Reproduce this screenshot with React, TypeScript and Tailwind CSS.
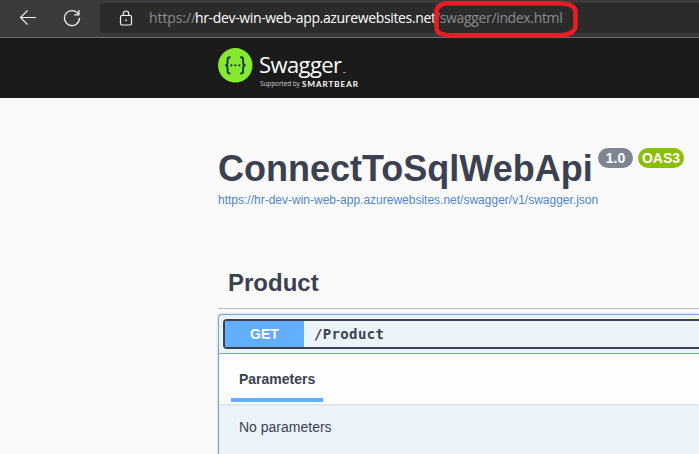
function BackIcon() {
  return (
    <svg className="ml-[19px] h-[18px] w-[18px] shrink-0" viewBox="0 0 18 18" fill="none" stroke="#f2f2f2" strokeWidth="1.2">
      <path d="M17 8.500H1.500M8.500 1.500 1.500 8.500l7 7" />
    </svg>
  );
}

function ReloadIcon() {
  return (
    <svg className="ml-[26px] h-[18px] w-[18px] shrink-0" viewBox="0 0 18 18" fill="none" stroke="#f2f2f2" strokeWidth="1.3">
      <path d="M15.6 5.5A7.5 7.5 0 1 0 16.5 9M15.9 1v4.8h-4.8" />
    </svg>
  );
}

function LockIcon() {
  return (
    <svg className="ml-[19px] h-[17px] w-[14px] shrink-0" viewBox="0 0 14 17" fill="none" stroke="#f2f2f2" strokeWidth="1.2">
      <rect x="1.5" y="5.500" width="11" height="9.500" rx="1.4" />
      <path d="M4.300 5.500V3.700a2.700 2.700 0 0 1 5.400 0v1.800" />
      <circle cx="7" cy="10.300" r="0.900" fill="#f2f2f2" stroke="none" />
    </svg>
  );
}

function BrowserBar() {
  return (
    <div className="relative flex h-[38px] border-b border-[#6a6a6a] bg-[#3b3b3b]">
      <div className="flex h-[35px] w-[100px] shrink-0 items-center">
        <BackIcon />
        <ReloadIcon />
      </div>
      <div className="mt-[3px] flex h-[30px] flex-1 items-center rounded-l bg-[#2b2b2b] font-['Open_Sans',sans-serif] text-[14px] leading-[30px] whitespace-nowrap">
        <LockIcon />
        <span className="ml-[16px] w-[46px] shrink-0 tracking-[-0.1px] text-[#8c8c8c]">https://</span>
        <span className="w-[240px] shrink-0 tracking-[-0.35px] text-white">hr-dev-win-web-app.azurewebsites.net</span>
        <span className="tracking-[-0.350px] text-[#8c8c8c]">/swagger/index.html</span>
      </div>
      <svg className="absolute top-0 left-[432px] h-[39px] w-[148px]" viewBox="0 0 148 39" fill="none" stroke="#ec1c24" strokeWidth="4.5" strokeLinejoin="round">
        <path d="M17 3.2H126Q143.5 3.5 143.5 12V25Q143.5 35 126 35.3H20Q4.500 35 4.500 28V12Q4.500 3.500 17 3.200Z" />
      </svg>
    </div>
  );
}

function SwaggerLogo() {
  return (
    <div className="flex pt-[10px] pl-[218px]">
      <svg className="h-[35px] w-[35px] shrink-0" viewBox="0 0 35 35">
        <circle cx="17.300" cy="17.300" r="17.200" fill="#85ea2d" />
        <g fill="none" stroke="#173647" strokeWidth="1.900">
          <path d="M12.500 9.300H11.500Q9.600 9.300 9.600 11.300V14.500Q9.600 17.300 7.200 17.300 9.600 17.300 9.600 20V23.400Q9.600 25.400 11.500 25.400H12.500" />
          <path d="M22.200 9.300H23.200Q25.100 9.300 25.100 11.300V14.500Q25.100 17.300 27.500 17.300 25.100 17.300 25.100 20V23.400Q25.100 25.400 23.200 25.400H22.200" />
        </g>
        <g fill="#173647">
          <circle cx="13.400" cy="17.300" r="1.150" />
          <circle cx="17.400" cy="17.300" r="1.150" />
          <circle cx="21.400" cy="17.300" r="1.150" />
        </g>
      </svg>
      <div className="ml-[6px] font-['Open_Sans',sans-serif] whitespace-nowrap text-white">
        <div className="flex h-[30px] items-end">
          <span className="text-[22px] leading-[28px] tracking-[-0.600px]">Swagger</span>
          <span className="mb-[5px] ml-[2px] h-px w-[3px] bg-[#8a8a8a]" />
        </div>
        <div className="flex h-[12px] items-center pl-px leading-[12px]">
          <span className="w-[42px] text-[6.500px] tracking-[-0.100px] text-[#cccccc]">Supported by</span>
          <span className="font-['Lato',sans-serif] text-[8px] font-bold tracking-[1px]">SMARTBEAR</span>
        </div>
      </div>
    </div>
  );
}

function ApiInfo() {
  return (
    <section className="h-[157px] pt-[48px] pl-[218px] whitespace-nowrap">
      <div className="flex h-[44px]">
        <h1 className="w-[375px] text-[36px] leading-[46px] font-bold">ConnectToSqlWebApi</h1>
        <div className="mt-[2px] ml-[5px] flex gap-[5px] text-center text-[14px] leading-[20px] font-bold text-white">
          <span className="h-[20px] w-[35px] rounded-full bg-[#7d8492]">1.0</span>
          <span className="h-[20px] w-[46px] rounded-full bg-[#89bf04]">OAS3</span>
        </div>
      </div>
      <a className="block text-[12px] leading-[20px] text-[#4f86c8]">https://hr-dev-win-web-app.azurewebsites.net/swagger/v1/swagger.json</a>
    </section>
  );
}

function Operation() {
  return (
    <div className="h-[150px] rounded-tl border-t border-l border-[#6fa8d8] bg-[#ebf3fb] shadow-[0_0_3px_rgba(0,0,0,0.19)]">
      <div className="h-[39px] border-b border-[#6fa8d8] pt-[4px] pl-[4px]">
        <div className="flex h-[30px] items-stretch rounded-l border-y-2 border-l-2 border-[#3b4151]">
          <span className="w-[79px] bg-[#61affe] text-center text-[14px] leading-[27px] font-bold text-white [text-shadow:0_1px_0_rgba(0,0,0,0.1)]">GET</span>
          <span className="pl-[10px] font-['DejaVu_Sans_Mono',monospace] text-[14px] leading-[27px] font-bold tracking-[0.350px]">/Product</span>
        </div>
      </div>
      <div className="h-[50px] bg-[#fdfeff] pl-[12px] shadow-[0_1px_2px_rgba(0,0,0,0.1)]">
        <h4 className="h-[48px] w-[92px] border-b-4 border-[#61affe] pl-[8px] text-[14px] leading-[50px] font-bold">Parameters</h4>
      </div>
      <p className="pl-[20px] text-[14px] leading-[46px]">No parameters</p>
    </div>
  );
}

export default function App() {
  return (
    <div className="h-[454px] w-full overflow-hidden bg-[#fafafa] font-['Liberation_Sans',sans-serif] text-[#3b4151]">
      <BrowserBar />
      <header className="h-[60px] bg-[#1b1b1b]">
        <SwaggerLogo />
      </header>
      <ApiInfo />
      <section className="pl-[218px]">
        <h2 className="mb-[5px] h-[54px] border-b border-[#bdbfc3] pl-[10px] text-[24px] leading-[56px] font-bold">Product</h2>
        <Operation />
      </section>
    </div>
  );
}
